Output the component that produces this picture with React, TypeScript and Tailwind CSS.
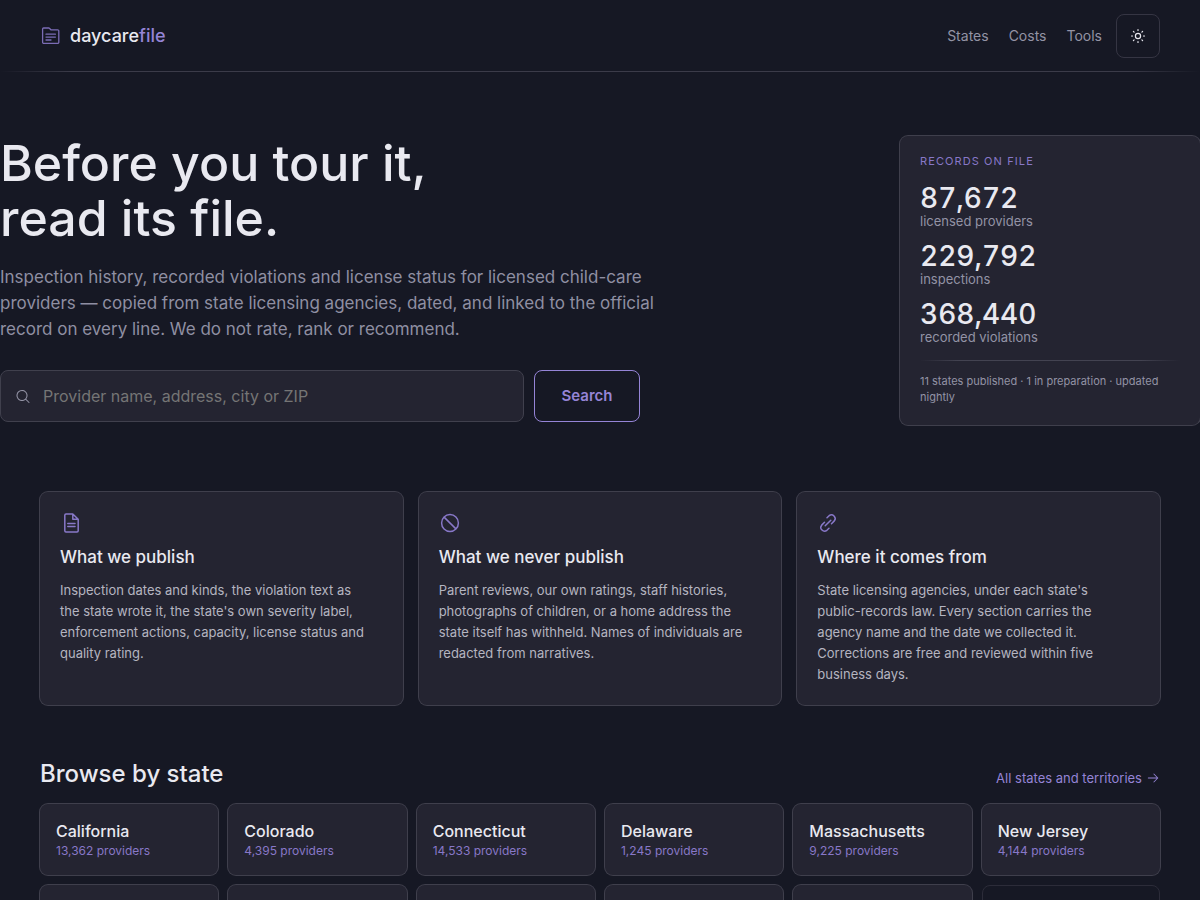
import type { FormEvent } from 'react';
import { PiArrowRight, PiMagnifyingGlass } from 'react-icons/pi';

const navLinks = ['States', 'Costs', 'Tools'];

const stats = [
  { value: '87,672', label: 'licensed providers' },
  { value: '229,792', label: 'inspections' },
  { value: '368,440', label: 'recorded violations' },
];

const LogoMark = () => (
  <svg width="22" height="22" viewBox="0 0 22 22" fill="none" stroke="currentColor" strokeWidth="1.3" aria-hidden="true">
    <path d="M2.6 17.2V4a1 1 0 0 1 1-1h5.1a1 1 0 0 1 .7.3l1.5 1.5h6.7a1.2 1.2 0 0 1 1.2 1.2v11.2a1.2 1.2 0 0 1-1.2 1.2H3.8a1.2 1.2 0 0 1-1.2-1.2Z" />
    <path d="M6 9.2h9.4M6 12.1h9.4M6 15h5" strokeLinecap="round" />
  </svg>
);

const SunIcon = () => (
  <svg width="16" height="16" viewBox="0 0 16 16" fill="none" stroke="currentColor" strokeWidth="1.2" aria-hidden="true">
    <circle cx="8" cy="8" r="2.6" />
    <path
      d="M8 1.5v1M8 13.5v1M1.5 8h1M13.5 8h1M3.4 3.4l.7.7M11.9 11.9l.7.7M3.4 12.6l.7-.7M11.9 4.1l.7-.7"
      strokeLinecap="round"
    />
  </svg>
);

const FileIcon = () => (
  <svg width="22" height="22" viewBox="0 0 22 22" fill="none" stroke="currentColor" strokeWidth="1.5" aria-hidden="true">
    <path
      d="M12.8 2H6a1.2 1.2 0 0 0-1.2 1.2v15.6A1.2 1.2 0 0 0 6 20h11a1.2 1.2 0 0 0 1.2-1.2V7.3L12.8 2v5.3h5.4"
      strokeLinejoin="round"
    />
    <path d="M7.8 11.4h7.2M7.8 14.6h7.2" strokeLinecap="round" />
  </svg>
);

const ProhibitIcon = () => (
  <svg width="22" height="22" viewBox="0 0 22 22" fill="none" stroke="currentColor" strokeWidth="1.5" aria-hidden="true">
    <circle cx="11" cy="11" r="8.4" />
    <path d="M5.1 5.1l11.8 11.8" />
  </svg>
);

const LinkIcon = () => (
  <svg
    width="22"
    height="22"
    viewBox="0 0 22 22"
    fill="none"
    stroke="currentColor"
    strokeWidth="1.5"
    strokeLinecap="round"
    aria-hidden="true"
  >
    <path d="M8.2 13.8l5.6-5.6" />
    <path d="M10 5.8l2.1-2.1a3.7 3.7 0 0 1 5.2 5.2l-2.8 2.8" />
    <path d="M12 16.2l-2.1 2.1a3.7 3.7 0 0 1-5.2-5.2l2.8-2.8" />
  </svg>
);

const features = [
  {
    icon: FileIcon,
    title: 'What we publish',
    text: "Inspection dates and kinds, the violation text as the state wrote it, the state's own severity label, enforcement actions, capacity, license status and quality rating.",
  },
  {
    icon: ProhibitIcon,
    title: 'What we never publish',
    text: 'Parent reviews, our own ratings, staff histories, photographs of children, or a home address the state itself has withheld. Names of individuals are redacted from narratives.',
  },
  {
    icon: LinkIcon,
    title: 'Where it comes from',
    text: "State licensing agencies, under each state's public-records law. Every section carries the agency name and the date we collected it. Corrections are free and reviewed within five business days.",
  },
];

const states = [
  { name: 'California', count: '13,362' },
  { name: 'Colorado', count: '4,395' },
  { name: 'Connecticut', count: '14,533' },
  { name: 'Delaware', count: '1,245' },
  { name: 'Massachusetts', count: '9,225' },
  { name: 'New Jersey', count: '4,144' },
];

// Tiles that have no data yet
const emptyTiles = [1, 2, 3, 4, 5];

const Header = () => (
  <header>
    <div className="flex h-[71px] items-center justify-between px-10">
      <a href="#" className="flex items-center gap-2 text-lg font-medium text-[#e9e9f0]">
        <span className="text-[#7b6cb5]">
          <LogoMark />
        </span>
        <span>
          daycare<span className="text-[#9584d6]">file</span>
        </span>
      </a>
      <nav className="flex items-center gap-5 text-sm text-[#9393a5]">
        {navLinks.map((link) => (
          <a key={link} href={`#${link.toLowerCase()}`}>
            {link}
          </a>
        ))}
        <button
          type="button"
          aria-label="Switch theme"
          className="-ml-1.5 flex size-11 items-center justify-center rounded-lg border border-[#353543] text-[#e9e9f0]"
        >
          <SunIcon />
        </button>
      </nav>
    </div>
    <div className="h-px bg-[linear-gradient(90deg,transparent,#3b3b49_6%,#3b3b49_94%,transparent)]" />
  </header>
);

const Hero = () => {
  const handleSubmit = (e: FormEvent) => e.preventDefault();

  return (
    <section className="grid grid-cols-[1fr_300px] gap-12 pt-16">
      <div>
        <h1 className="text-[50px] leading-[55px] font-medium text-[#e9e9f0]">
          Before you tour it,
          <br />
          read its file.
        </h1>
        <p className="mt-[18px] max-w-[672px] text-[17px] leading-[26px] text-[#8f8fa2]">
          Inspection history, recorded violations and license status for licensed child-care providers — copied from
          state licensing agencies, dated, and linked to the official record on every line. We do not rate, rank or
          recommend.
        </p>
        <form onSubmit={handleSubmit} className="mt-7 flex max-w-[640px] gap-2.5">
          <label className="flex h-[52px] flex-1 items-center gap-3 rounded-lg border border-[#40404d] bg-[#242431] px-3.5 text-[#9393a5]">
            <PiMagnifyingGlass size={17} aria-hidden="true" />
            <input
              type="search"
              aria-label="Search providers"
              placeholder="Provider name, address, city or ZIP"
              className="w-full bg-transparent text-base text-[#e9e9f0] outline-none placeholder:text-[#757575]"
            />
          </label>
          <button
            type="submit"
            className="w-[106px] rounded-lg border border-[#9584d6] text-[15px] font-semibold text-[#9584d6]"
          >
            Search
          </button>
        </form>
      </div>

      <aside className="self-start rounded-lg bg-[#242431] p-5 ring-1 ring-[#3f3f4c]">
        <h2 className="text-[11px] leading-[10px] tracking-widest text-[#8878c8] uppercase">Records on file</h2>
        <dl className="mt-4 flex flex-col gap-3">
          {stats.map((stat) => (
            <div key={stat.label} className="flex flex-col-reverse">
              <dt className="text-[13px] leading-[14px] text-[#9393a5]">{stat.label}</dt>
              <dd className="text-[28px] leading-8 font-medium text-[#e9e9f0] tabular-nums">{stat.value}</dd>
            </div>
          ))}
        </dl>
        <div className="mt-4 h-px bg-[linear-gradient(90deg,transparent,#434351_15%,#434351_85%,transparent)]" />
        <p className="mt-3 text-[11px] leading-4 text-[#9393a5]">
          11 states published · 1 in preparation · updated nightly
        </p>
      </aside>
    </section>
  );
};

const Features = () => (
  <section className="grid grid-cols-3 gap-4 px-10 pt-[67px]">
    {features.map(({ icon: Icon, title, text }) => (
      <article key={title} className="rounded-lg bg-[#242431] p-5 ring-1 ring-[#3f3f4c]">
        <span className="block text-[#8878c8]">
          <Icon />
        </span>
        <h3 className="mt-3 text-[17px] leading-[22px] font-medium text-[#e9e9f0]">{title}</h3>
        <p className="mt-3 max-w-[310px] text-[13px] leading-[21px] text-[#b5b5c0]">{text}</p>
      </article>
    ))}
  </section>
);

const BrowseStates = () => (
  <section className="px-10 pt-[55px] pb-16">
    <div className="flex items-end justify-between">
      <h2 className="text-2xl leading-7 font-medium text-[#e9e9f0]">Browse by state</h2>
      <a href="#states" className="flex items-center gap-1 text-[13px] leading-5 text-[#9584d6]">
        All states and territories <PiArrowRight size={14} aria-hidden="true" />
      </a>
    </div>
    <div className="mt-4 grid grid-cols-6 gap-2.5">
      {states.map((state) => (
        <a
          key={state.name}
          href="#states"
          className="flex flex-col rounded-lg bg-[#242431] p-4 ring-1 ring-[#3f3f4c]"
        >
          <span className="text-base leading-[22px] font-medium text-[#e9e9f0]">{state.name}</span>
          <span className="text-xs leading-[17px] text-[#8878c8]">{state.count} providers</span>
        </a>
      ))}
      {emptyTiles.map((tile) => (
        <div key={tile} className="min-h-[71px] rounded-lg bg-[#242431] ring-1 ring-[#3f3f4c]" />
      ))}
      <div className="rounded-lg border border-[#2c2c39]" />
    </div>
  </section>
);

const App = () => (
  <div className="min-h-screen bg-[#161824] font-['Inter',sans-serif]">
    <Header />
    <main>
      <Hero />
      <Features />
      <BrowseStates />
    </main>
  </div>
);

export default App;
